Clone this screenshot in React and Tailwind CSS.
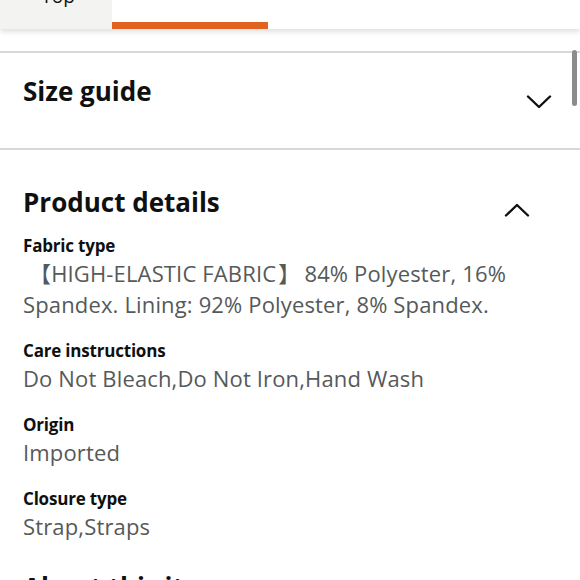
import React from "react";

const details = [
  {
    label: "Fabric type",
    value: (
      <>
        <span className="pl-[6px]">【</span>HIGH-ELASTIC FABRIC<span className="pl-[2px] pr-[4px]">】</span>84% Polyester, 16% Spandex. Lining: 92% Polyester, 8% Spandex.
      </>
    ),
  },
  { label: "Care instructions", value: "Do Not Bleach,Do Not Iron,Hand Wash" },
  { label: "Origin", value: "Imported" },
  { label: "Closure type", value: "Strap,Straps" },
];

function Chevron({ up }) {
  return (
    <svg width="26" height="14" viewBox="0 0 26 14" fill="none">
      <path
        d={up ? "M2 12.5L13 2L24 12.5" : "M2 1.5L13 12L24 1.5"}
        stroke="#0f1111"
        strokeWidth="2.4"
        strokeLinecap="round"
        strokeLinejoin="round"
      />
    </svg>
  );
}

export default function App() {
  return (
    <div className="relative w-[580px] h-[580px] overflow-hidden bg-white text-[#0f1111] font-['Open_Sans','Noto_Sans_CJK_SC',sans-serif]">
      {/* tab bar */}
      <div className="flex h-[29px] shadow-[0_3px_5px_rgba(0,0,0,0.12)] relative z-10 bg-white">
        <div className="w-[112px] bg-[#f3f3f1] flex justify-center">
          <span className="text-[19px] leading-[20px] -mt-[14px] pl-[4px]">Top</span>
        </div>
        <div className="w-[156px] border-b-[7px] border-[#e0641f]" />
      </div>

      {/* size guide */}
      <div className="mt-[22px] border-t-2 border-[#d8d8d8] h-[97px] flex items-center justify-between pl-[23px] pr-[28px]">
        <h2 className="text-[26px] font-bold leading-[32px] -mt-[20px]">Size guide</h2>
        <div className="mt-[2px]">
          <Chevron />
        </div>
      </div>

      {/* product details */}
      <div className="border-t-2 border-[#d8d8d8] pl-[23px] pr-[50px] pt-[36px]">
        <div className="flex items-start justify-between">
          <h2 className="text-[26px] font-bold leading-[32px]">Product details</h2>
          <div className="mt-[17px]">
            <Chevron up />
          </div>
        </div>
        <div className="mt-[16px] flex flex-col gap-[19px]">
          {details.map((d) => (
            <div key={d.label}>
              <div className="text-[17px] font-bold leading-[24px] tracking-[-0.2px]">{d.label}</div>
              <div className="text-[22px] leading-[31px] tracking-[0.15px] text-[#565959] pr-[10px]">{d.value}</div>
            </div>
          ))}
        </div>
        <h2 className="mt-[29px] text-[26px] font-bold leading-[32px]">About this item</h2>
      </div>

      {/* scrollbar */}
      <div className="absolute right-[3px] top-[50px] w-[5px] h-[56px] rounded-full bg-[#8c8c8c]" />
    </div>
  );
}
